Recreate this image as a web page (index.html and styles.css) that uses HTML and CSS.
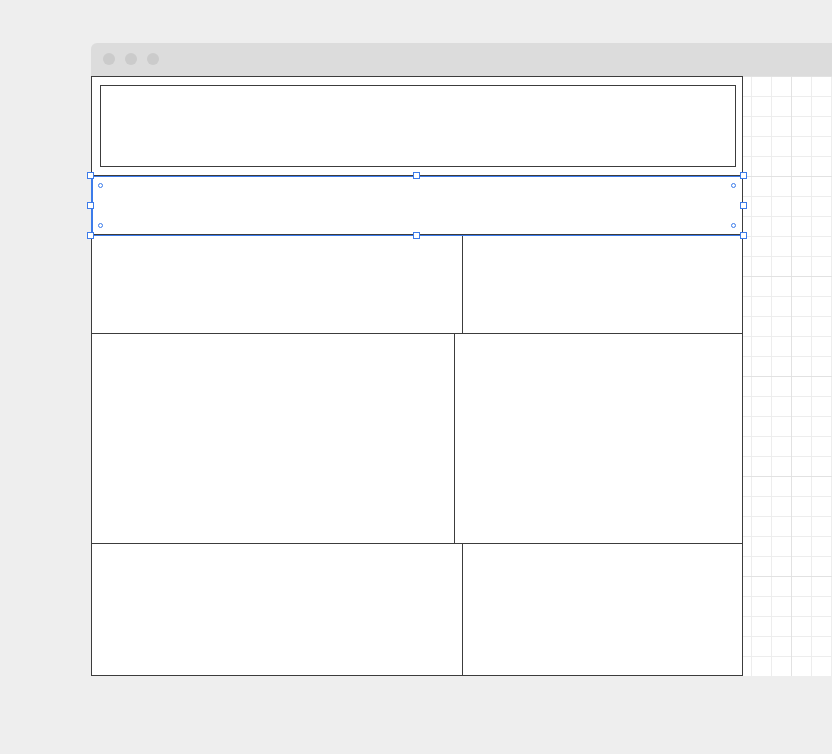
FILE: index.html
```html
<!DOCTYPE html>
<html lang="en">
<head>
<meta charset="utf-8">
<title>Layout editor</title>
<link rel="stylesheet" href="styles.css">
</head>
<body>
<div class="window">
  <div class="titlebar">
    <span class="dot"></span><span class="dot"></span><span class="dot"></span>
  </div>
  <div class="canvas">
    <div class="frame">
      <div class="sec-header"><div class="header-box"></div></div>
      <div class="sec sec-nav"></div>
      <div class="sec row row-a">
        <div class="cell cell-l1"></div><div class="cell cell-r"></div>
      </div>
      <div class="sec row row-b">
        <div class="cell cell-l2"></div><div class="cell cell-r"></div>
      </div>
      <div class="sec row row-c">
        <div class="cell cell-l1"></div><div class="cell cell-r"></div>
      </div>
      <div class="selection">
        <span class="handle h-tl"></span><span class="handle h-tm"></span><span class="handle h-tr"></span>
        <span class="handle h-ml"></span><span class="handle h-mr"></span>
        <span class="handle h-bl"></span><span class="handle h-bm"></span><span class="handle h-br"></span>
        <span class="pad p-tl"></span><span class="pad p-tr"></span>
        <span class="pad p-bl"></span><span class="pad p-br"></span>
      </div>
    </div>
  </div>
</div>
</body>
</html>
```
FILE: styles.css
```css
* { box-sizing: border-box; }
html, body { margin: 0; padding: 0; }
body {
  background: #eeeeee;
  font-family: "Liberation Sans", Arial, sans-serif;
  width: 832px;
  height: 754px;
  overflow: hidden;
}
.window {
  margin: 43px 0 0 91px;
  width: 741px;
}
.titlebar {
  height: 33px;
  background: #dcdcdc;
  border-top-left-radius: 6px;
  display: flex;
  align-items: center;
  padding: 0 0 1px 12px;
  gap: 10px;
}
.dot {
  width: 12px;
  height: 12px;
  border-radius: 50%;
  background: #cbcbcb;
}
.canvas {
  height: 600px;
  background-color: #ffffff;
  background-image:
    linear-gradient(to right, #e2e2e2 1px, transparent 1px),
    linear-gradient(to bottom, #e2e2e2 1px, transparent 1px),
    linear-gradient(to right, #ededed 1px, transparent 1px),
    linear-gradient(to bottom, #ededed 1px, transparent 1px);
  background-size: 100px 100px, 100px 100px, 20px 20px, 20px 20px;
}
.frame {
  position: relative;
  width: 652px;
  height: 600px;
  background: #ffffff;
  border: 1px solid #3c3c3c;
  display: flex;
  flex-direction: column;
}
.sec-header {
  height: 98px;
  padding: 8px 6px 8px 8px;
}
.header-box {
  height: 82px;
  border: 1px solid #3c3c3c;
}
.sec { border-top: 1px solid #3c3c3c; }
.sec-nav { height: 59px; }
.row { display: flex; }
.row-a { height: 99px; }
.row-b { height: 210px; }
.row-c { height: 132px; }
.cell-l1 { width: 370px; }
.cell-l2 { width: 362px; }
.cell-r { flex: 1; border-left: 1px solid #3c3c3c; }

.selection {
  position: absolute;
  left: -1px;
  top: 99px;
  width: 652px;
  height: 60px;
  border-left: 2px solid #3b7bea;
  border-top: 1px solid #3b7bea;
  border-bottom: 1px solid #3b7bea;
}
.handle {
  position: absolute;
  width: 7px;
  height: 7px;
  background: #ffffff;
  border: 1px solid #3b7bea;
}
.h-tl { left: -6px; top: -5px; }
.h-tm { left: 320px; top: -5px; }
.h-tr { left: 647px; top: -5px; }
.h-ml { left: -6px; top: 25px; }
.h-mr { left: 647px; top: 25px; }
.h-bl { left: -6px; top: 55px; }
.h-bm { left: 320px; top: 55px; }
.h-br { left: 647px; top: 55px; }
.pad {
  position: absolute;
  width: 5px;
  height: 5px;
  border: 1px solid #3b7bea;
  border-radius: 50%;
  background: #ffffff;
}
.p-tl { left: 5px; top: 6px; }
.p-tr { left: 638px; top: 6px; }
.p-bl { left: 5px; top: 46px; }
.p-br { left: 638px; top: 46px; }
```
